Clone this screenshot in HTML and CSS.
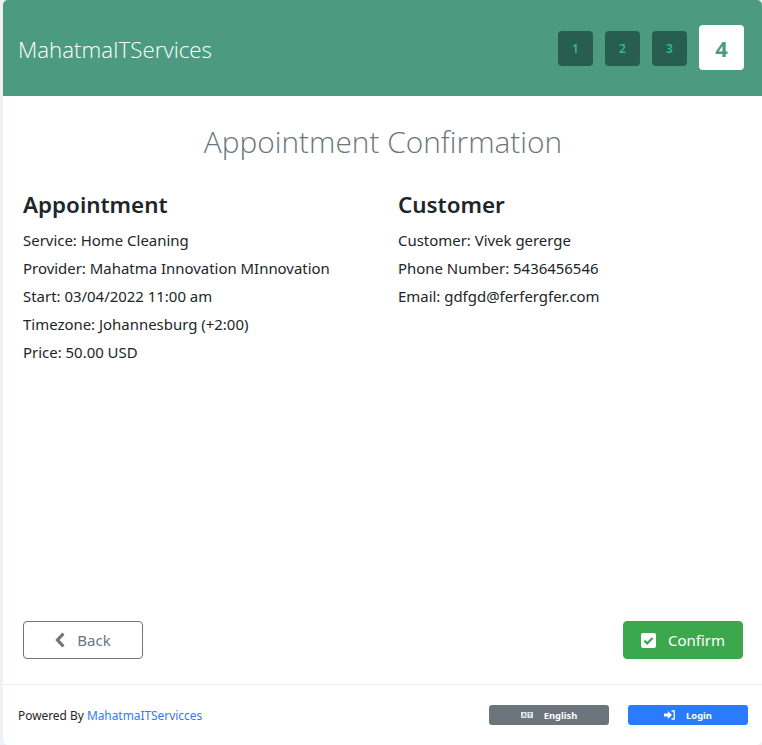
FILE: index.html
```html
<!DOCTYPE html>
<html lang="en">
<head>
    <meta charset="UTF-8">
    <meta name="viewport" content="width=device-width, initial-scale=1.0">
    <title>Appointment Confirmation</title>
    <link rel="stylesheet" href="styles.css">
</head>
<body>
    <div class="card">
        <header class="top-bar">
            <div class="brand">MahatmaITServices</div>
            <div class="steps">
                <div class="step">1</div>
                <div class="step">2</div>
                <div class="step">3</div>
                <div class="step active">4</div>
            </div>
        </header>

        <main class="content">
            <h1 class="page-title">Appointment Confirmation</h1>
            <div class="details">
                <section class="detail-col">
                    <h2>Appointment</h2>
                    <p>Service: Home Cleaning</p>
                    <p>Provider: Mahatma Innovation MInnovation</p>
                    <p>Start: 03/04/2022 11:00 am</p>
                    <p>Timezone: Johannesburg (+2:00)</p>
                    <p>Price: 50.00 USD</p>
                </section>
                <section class="detail-col">
                    <h2>Customer</h2>
                    <p>Customer: Vivek gererge</p>
                    <p>Phone Number: 5436456546</p>
                    <p>Email: gdfgd@ferfergfer.com</p>
                </section>
            </div>
            <div class="actions">
                <button class="btn btn-back">
                    <svg viewBox="0 0 10 16" width="10" height="16"><path d="M8.4 1.6L2.4 8L8.4 14.4" fill="none" stroke="currentColor" stroke-width="3"/></svg>
                    Back
                </button>
                <button class="btn btn-confirm">
                    <svg viewBox="0 0 15 15" width="15" height="15"><rect width="15" height="15" rx="2" fill="#fff"/><path d="M3.4 7.6L6.2 10.4L11.6 5" fill="none" stroke="#3ba84e" stroke-width="2.2"/></svg>
                    Confirm
                </button>
            </div>
        </main>

        <footer class="foot">
            <div class="powered">Powered By <a href="#">MahatmaITServicces</a></div>
            <div class="foot-buttons">
                <button class="small-btn lang">
                    <svg viewBox="0 0 12 6" width="12" height="6"><rect width="12" height="6" fill="#dfe2e4"/><path d="M6 0V6" stroke="#6c757d" stroke-width="0.8"/><path d="M1.6 5L3 1.2L4.4 5M7.8 1.5H10.4M9.1 1.5V5" fill="none" stroke="#6c757d" stroke-width="0.9"/></svg>
                    English
                </button>
                <button class="small-btn login">
                    <svg viewBox="0 0 11 10" width="11" height="10"><path d="M0 3.6H3.8V1L8 5L3.8 9V6.4H0Z" fill="#fff"/><path d="M7.5 1H10.2V9H7.5" fill="none" stroke="#fff" stroke-width="1.3"/></svg>
                    Login
                </button>
            </div>
        </footer>
    </div>
</body>
</html>
```

FILE: styles.css
```css
html, body {
    height: 100%;
}
body {
    margin: 0;
    padding-left: 3px;
    background-color: #edf1f6;
    font-family: "Noto Sans", sans-serif;
    color: #212529;
    overflow: hidden;
}
.card {
    height: 745px;
    display: flex;
    flex-direction: column;
    background-color: #fff;
    border-radius: 5px;
    overflow: hidden;
}
.top-bar {
    height: 96px;
    flex: none;
    display: flex;
    align-items: center;
    justify-content: space-between;
    padding: 0 18px 0 15px;
    background-color: #4c9b80;
}
.brand {
    padding-top: 3px;
    font-family: "Open Sans", sans-serif;
    font-size: 22.3px;
    font-weight: 300;
    color: #fff;
}
.steps {
    display: flex;
    align-items: center;
    gap: 12px;
}
.step {
    width: 35px;
    height: 35px;
    display: flex;
    align-items: center;
    justify-content: center;
    border-radius: 4px;
    background-color: #285e4e;
    color: #2cbd8b;
    font-size: 12px;
    font-weight: 600;
}
.step.active {
    width: 45px;
    height: 45px;
    margin-bottom: 1px;
    background-color: #fff;
    color: #4c9b80;
    font-size: 22px;
    font-weight: 700;
}
.content {
    flex: 1;
    display: flex;
    flex-direction: column;
    padding: 24px 19px 25px 20px;
}
.page-title {
    margin: 0;
    text-align: center;
    font-family: "Open Sans", sans-serif;
    font-size: 29.85px;
    line-height: 44px;
    font-weight: 300;
    color: #6c757d;
}
.details {
    flex: 1;
    display: grid;
    grid-template-columns: 375px 1fr;
    padding-top: 25px;
}
.detail-col h2 {
    margin: 0 0 5px;
    font-size: 22.4px;
    line-height: 32px;
    font-weight: 600;
}
.detail-col p {
    margin: 0;
    font-size: 14.95px;
    line-height: 28px;
}
.actions {
    display: flex;
    justify-content: space-between;
}
.btn {
    width: 120px;
    height: 38px;
    display: flex;
    align-items: center;
    justify-content: center;
    gap: 12px;
    padding: 0;
    border-radius: 4px;
    font-family: inherit;
    font-size: 15px;
}
.btn-back {
    background-color: #fff;
    border: 1px solid #6c757d;
    color: #6c757d;
}
.btn-confirm {
    background-color: #3ba84e;
    border: 1px solid #3ba84e;
    color: #fff;
}
.foot {
    height: 60px;
    flex: none;
    display: flex;
    align-items: center;
    justify-content: space-between;
    padding: 0 14px 0 15px;
    border-top: 1px solid #e9ecef;
}
.powered {
    font-size: 11.9px;
}
.powered a {
    color: #2f7bf5;
    text-decoration: none;
}
.foot-buttons {
    display: flex;
    gap: 19px;
}
.small-btn {
    width: 120px;
    height: 20px;
    display: flex;
    align-items: center;
    justify-content: center;
    gap: 11px;
    padding: 0;
    border: none;
    border-radius: 3px;
    color: #fff;
    font-family: inherit;
    font-size: 9.4px;
    font-weight: 700;
}
.lang {
    background-color: #6c757d;
}
.login {
    background-color: #2a7bff;
}
```
